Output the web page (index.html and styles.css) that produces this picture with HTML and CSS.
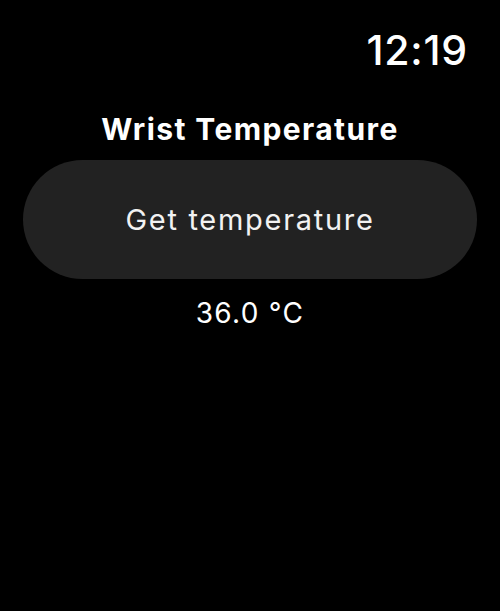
FILE: index.html
```
<!DOCTYPE html>
<html lang="en">
<head>
	<meta charset="UTF-8">
	<title>Wrist Temperature</title>
	<link rel="stylesheet" href="styles.css">
</head>
<body>
	<div class="status">
		<span class="time">12:19</span>
	</div>
	<div class="title">Wrist Temperature</div>
	<div class="btn_wrap">
		<a href="javascript:;" class="get_btn">Get temperature</a>
	</div>
	<div class="value">36.0 °C</div>
</body>
</html>
```
FILE: styles.css
```
body,div,p,a{margin:0;padding:0}
html,body{width:100%;height:100%;background:#000;}
body{font-family:Inter,"Noto Sans",sans-serif;color:#fff;}
a{text-decoration:none;}
.status{height:96px;display:flex;justify-content:flex-end;align-items:flex-start;padding-right:32px;box-sizing:border-box;}
.time{font-size:41px;font-weight:500;line-height:1;margin-top:30px;letter-spacing:0.8px;}
.title{text-align:center;font-size:30px;font-weight:700;line-height:34px;margin-top:16px;letter-spacing:1.4px;}
.btn_wrap{padding:0 23px;margin-top:14px;}
.get_btn{display:flex;align-items:center;justify-content:center;height:119px;border-radius:60px;background:#222;color:#f2f2f2;font-size:29px;letter-spacing:1.7px;}
.value{text-align:center;font-size:28px;line-height:34px;margin-top:17px;letter-spacing:1.3px;}
```
